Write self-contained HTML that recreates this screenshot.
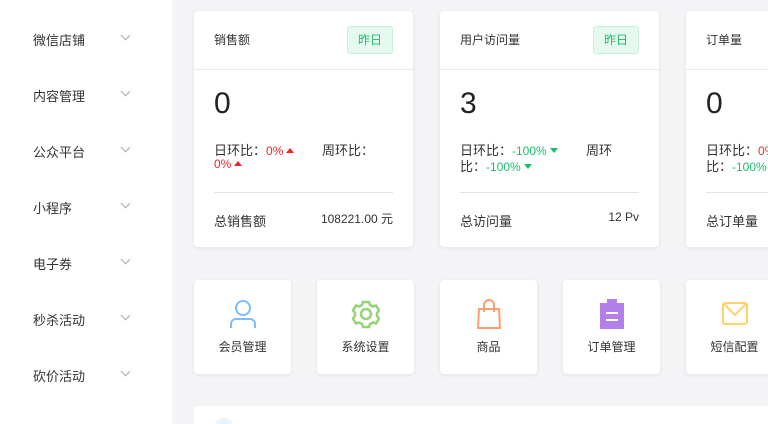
<!DOCTYPE html>
<html><head><meta charset="utf-8"><style>
*{margin:0;padding:0;box-sizing:border-box}
html{width:768px;height:424px;overflow:hidden}
body{width:768px;height:424px;overflow:hidden;background:#f4f4f6;font-family:"Liberation Sans","Noto Sans CJK SC",sans-serif;color:#333;position:relative}
.side{position:absolute;left:0;top:0;width:172px;height:424px;background:#fff}
.mi{position:absolute;left:33px;font-size:13px;color:#333}
.ar{position:absolute;left:122px;width:7px;height:7px;border-right:1px solid #aaa;border-bottom:1px solid #aaa;transform:rotate(45deg)}
.card{position:absolute;top:11px;width:219px;height:236px;background:#fff;border-radius:4px;box-shadow:0 1px 4px rgba(0,0,0,.08)}
.card .t{position:absolute;left:20px;top:20px;font-size:12px}
.tag{position:absolute;left:153px;top:15px;width:46px;height:28px;border:1px solid #c8f0d6;background:#e6f9ee;color:#19be6b;font-size:12px;line-height:26px;text-align:center;border-radius:3px}
.card .hr{position:absolute;left:0;right:0;top:58px;border-top:1px solid #e8eaf0}
.num{position:absolute;left:20px;top:76px;font-size:30px;color:#222}
.l{position:absolute;font-size:13px;color:#333;white-space:nowrap}
.r{color:#f5222d;font-size:12px}.g{color:#19be6b;font-size:12px}
.up{display:inline-block;border:4px solid transparent;border-bottom:5px solid #f5222d;border-top:0;margin-left:3px;vertical-align:2px}
.dn{display:inline-block;border:4px solid transparent;border-top:5px solid #19be6b;border-bottom:0;margin-left:3px;vertical-align:2px}
.card .hr2{position:absolute;left:20px;right:20px;top:181px;border-top:1px solid #e1e3ea}
.tile{position:absolute;top:280px;width:97px;height:94px;background:#fff;border-radius:4px;box-shadow:0 1px 4px rgba(0,0,0,.08)}
.tile svg{position:absolute;left:35px;top:19px}
.tile span{position:absolute;left:0;right:0;top:58px;text-align:center;font-size:12px;color:#333}
</style></head><body>
<div class="side">
<div class="mi" style="top:30px">微信店铺</div><div class="ar" style="top:32px"></div>
<div class="mi" style="top:86px">内容管理</div><div class="ar" style="top:88px"></div>
<div class="mi" style="top:142px">公众平台</div><div class="ar" style="top:144px"></div>
<div class="mi" style="top:198px">小程序</div><div class="ar" style="top:200px"></div>
<div class="mi" style="top:254px">电子券</div><div class="ar" style="top:256px"></div>
<div class="mi" style="top:310px">秒杀活动</div><div class="ar" style="top:312px"></div>
<div class="mi" style="top:366px">砍价活动</div><div class="ar" style="top:368px"></div>
</div>

<div class="card" style="left:194px">
<div class="t">销售额</div><div class="tag">昨日</div><div class="hr"></div>
<div class="num">0</div>
<div class="l" style="left:20px;top:129px">日环比：<span class="r">0%</span><span class="up"></span></div>
<div class="l" style="left:128px;top:129px">周环比：</div>
<div class="l" style="left:20px;top:145px"><span class="r">0%</span><span class="up"></span></div>
<div class="hr2"></div>
<div class="l" style="left:20px;top:200px">总销售额</div>
<div class="l" style="right:20px;top:199px;font-size:12px">108221.00 元</div>
</div>

<div class="card" style="left:440px">
<div class="t">用户访问量</div><div class="tag">昨日</div><div class="hr"></div>
<div class="num">3</div>
<div class="l" style="left:20px;top:129px">日环比：<span class="g">-100%</span><span class="dn"></span></div>
<div class="l" style="left:146px;top:129px">周环</div>
<div class="l" style="left:20px;top:145px">比：<span class="g">-100%</span><span class="dn"></span></div>
<div class="hr2"></div>
<div class="l" style="left:20px;top:200px">总访问量</div>
<div class="l" style="right:20px;top:199px;font-size:12px">12 Pv</div>
</div>

<div class="card" style="left:686px">
<div class="t">订单量</div><div class="hr"></div>
<div class="num">0</div>
<div class="l" style="left:20px;top:129px">日环比：<span class="r">0%</span></div>
<div class="l" style="left:20px;top:145px">比：<span class="g">-100%</span></div>
<div class="hr2"></div>
<div class="l" style="left:20px;top:200px">总订单量</div>
</div>

<div class="tile" style="left:194px"><svg width="28" height="30" viewBox="0 0 28 30" fill="none" stroke="#7cbcff" stroke-width="2"><circle cx="14" cy="9" r="7"/><path d="M2 29v-4a5 5 0 0 1 5-5h14a5 5 0 0 1 5 5v4"/></svg><span>会员管理</span></div>
<div class="tile" style="left:317px"><svg width="28" height="30" viewBox="0 0 28 30" fill="none" stroke="#95d475" stroke-width="2.5"><path d="M11 3h6l1 3 3 1.5 3-1 3 5-2 2.5v3l2 2.5-3 5-3-1-3 1.5-1 3h-6l-1-3-3-1.5-3 1-3-5 2-2.5v-3l-2-2.5 3-5 3 1 3-1.5z"/><circle cx="14" cy="15" r="5"/></svg><span>系统设置</span></div>
<div class="tile" style="left:440px"><svg width="28" height="30" viewBox="0 0 28 30" fill="none" stroke="#ff9f70" stroke-width="2"><path d="M4 10h20l1 19H3z"/><path d="M9 13V6a5 5 0 0 1 10 0v7"/></svg><span>商品</span></div>
<div class="tile" style="left:563px"><svg width="28" height="30" viewBox="0 0 28 30"><rect x="2" y="4" width="24" height="26" fill="#b37feb"/><rect x="9" y="0" width="10" height="4" fill="#b37feb"/><rect x="8" y="13" width="12" height="2" fill="#fff"/><rect x="8" y="20" width="12" height="2" fill="#fff"/></svg><span>订单管理</span></div>
<div class="tile" style="left:686px"><svg width="28" height="30" viewBox="0 0 28 30" fill="none" stroke="#ffd36b" stroke-width="2"><rect x="2" y="4" width="24" height="21" rx="2"/><path d="M3 5l11 11 11-11"/></svg><span>短信配置</span></div>

<div style="position:absolute;left:194px;top:406px;width:574px;height:18px;background:#fff;border-radius:4px 0 0 0;overflow:hidden"><div style="position:absolute;left:20px;top:12px;width:20px;height:20px;border-radius:50%;background:#e6f4ff"></div></div>
</body></html>
